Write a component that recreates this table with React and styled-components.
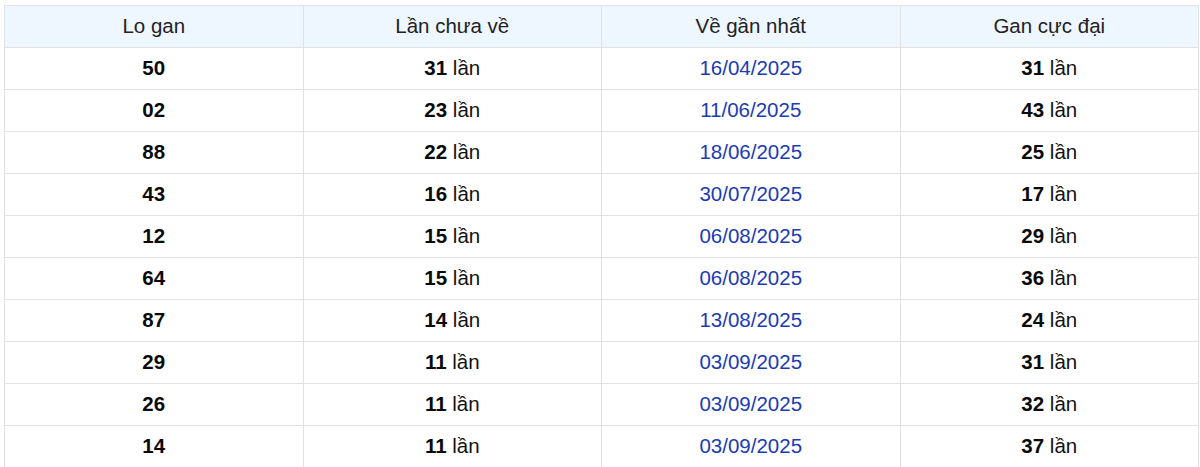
import React from "react";
import styled, { createGlobalStyle } from "styled-components";

const Global = createGlobalStyle`
  html, body { margin: 0; padding: 0; background: #fff; }
  body { font-family: "Liberation Sans", Arial, sans-serif; }
`;

const Wrap = styled.div`
  padding: 5px 1px 0 4px;
  height: 467px;
  overflow: hidden;
  box-sizing: border-box;
`;

const Table = styled.table`
  width: 1195px;
  border-collapse: collapse;
  table-layout: fixed;
  font-size: 20.5px;
`;

const Th = styled.th`
  height: 42px;
  padding: 0 0 2px;
  box-sizing: border-box;
  border: 1px solid #e2e2e2;
  background: #eef6ff;
  color: #222;
  font-weight: 400;
  text-align: center;
`;

const Td = styled.td`
  height: 42px;
  padding: 0 0 2px;
  box-sizing: border-box;
  border: 1px solid #e2e2e2;
  text-align: center;
  color: ${(p) => (p.$blue ? "#1c3bb4" : "#111")};
`;

const B = styled.b`
  font-weight: 700;
  color: #0a0a0a;
`;

const rows = [
  ["50", "31", "16/04/2025", "31"],
  ["02", "23", "11/06/2025", "43"],
  ["88", "22", "18/06/2025", "25"],
  ["43", "16", "30/07/2025", "17"],
  ["12", "15", "06/08/2025", "29"],
  ["64", "15", "06/08/2025", "36"],
  ["87", "14", "13/08/2025", "24"],
  ["29", "11", "03/09/2025", "31"],
  ["26", "11", "03/09/2025", "32"],
  ["14", "11", "03/09/2025", "37"],
];

export default function App() {
  return (
    <>
      <Global />
      <Wrap>
        <Table>
          <thead>
            <tr>
              <Th>Lo gan</Th>
              <Th>Lần chưa về</Th>
              <Th>Về gần nhất</Th>
              <Th>Gan cực đại</Th>
            </tr>
          </thead>
          <tbody>
            {rows.map((r, i) => (
              <tr key={i}>
                <Td><B>{r[0]}</B></Td>
                <Td><B>{r[1]}</B> lần</Td>
                <Td $blue>{r[2]}</Td>
                <Td><B>{r[3]}</B> lần</Td>
              </tr>
            ))}
          </tbody>
        </Table>
      </Wrap>
    </>
  );
}
